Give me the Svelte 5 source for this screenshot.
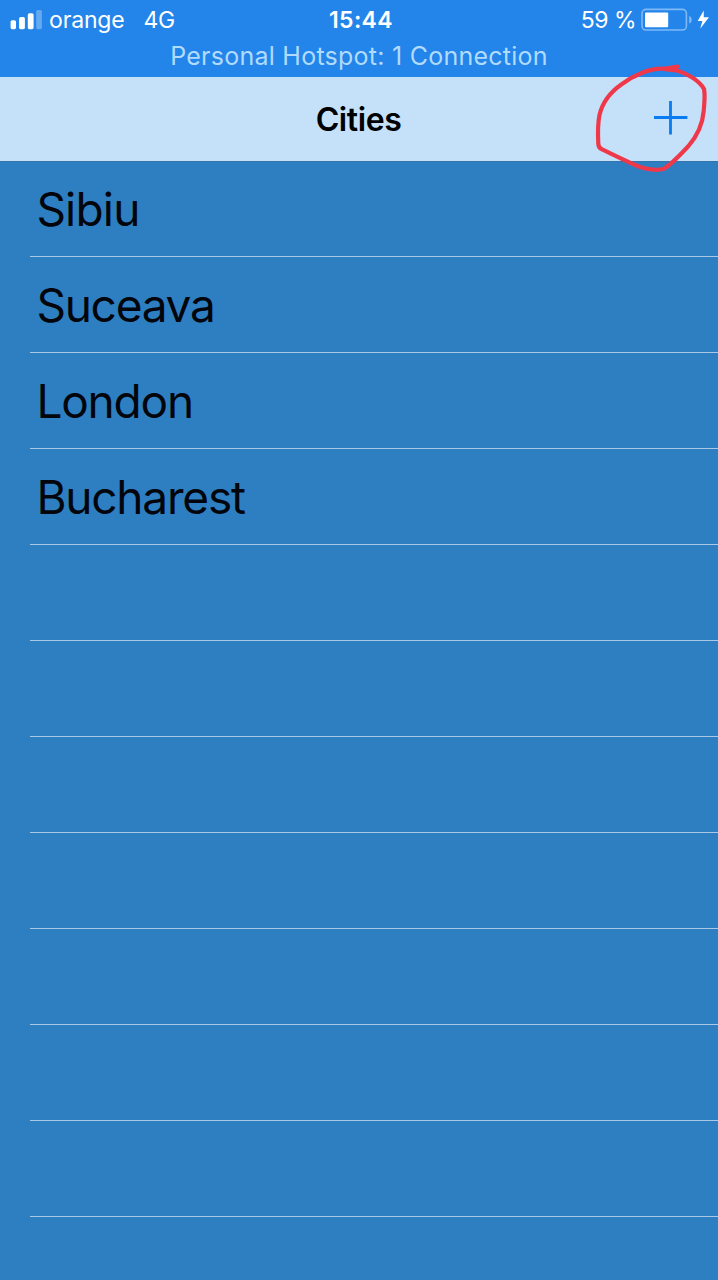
<script>
  const cities = [
    { name: 'Sibiu', spacing: -0.8 },
    { name: 'Suceava', spacing: -1.25 },
    { name: 'London', spacing: -1.2 },
    { name: 'Bucharest', spacing: -1.2 }
  ];
  const emptyRows = Array.from({ length: 8 });
</script>

<main class="screen">
  <header class="status">
    <div class="bar">
      <div class="left">
        <svg class="signal" width="32" height="20" viewBox="0 0 32 20">
          <rect x="0.6" y="10.2" width="5.4" height="9" rx="1.6" fill="#fff" />
          <rect x="9.1" y="7" width="5.8" height="12.2" rx="1.6" fill="#fff" />
          <rect x="17.8" y="3.2" width="5.8" height="16" rx="1.6" fill="#fff" />
          <rect x="26.2" y="0" width="5.7" height="19.2" rx="1.6" fill="#65aaf1" />
        </svg>
        <span class="carrier">orange</span>
        <span class="network">4G</span>
      </div>
      <span class="time">15:44</span>
      <div class="right">
        <span class="percent">59 %</span>
        <svg class="battery" width="70" height="24" viewBox="0 0 70 24">
          <rect x="2" y="1.4" width="44.4" height="20.6" rx="4" fill="none" stroke="#7fb9f5" stroke-width="1.6" />
          <rect x="5" y="4.4" width="23.2" height="14.8" rx="1" fill="#fff" />
          <path d="M49.2 8c3.4.8 3.4 6.8 0 7.6z" fill="#7fb9f5" />
          <path d="M63.7 2.4 57.7 12.9h4.7L60.2 20.8 69 9.3h-5.2z" fill="#fff" />
        </svg>
      </div>
    </div>
    <div class="hotspot"><span>Personal Hotspot: 1 Connection</span></div>
  </header>

  <nav class="nav">
    <h1>Cities</h1>
    <button aria-label="Add city">
      <svg width="34" height="34" viewBox="0 0 34 34">
        <path d="M0 16.5H33.4M16.5 0V33.4" stroke="#087cf0" stroke-width="2.8" />
      </svg>
    </button>
  </nav>

  <ul class="list">
    {#each cities as city}
      <li><span style:letter-spacing="{city.spacing}px">{city.name}</span></li>
    {/each}
    {#each emptyRows as _}
      <li></li>
    {/each}
  </ul>

  <svg class="mark" width="138" height="130" viewBox="0 0 138 130">
    <path
      d="M97.5 16.5 L84 18.7 C70 18 54 25 42 34 C29 43 22 54 19.5 65 C17.8 73 17.8 84 18.3 94 Q18.7 98 22 99.3 C34 105 49 112.5 60 117 C68 119.6 77 120.4 83.5 119 C92 114 101 104 108.5 96 C118 85 122.5 75 123.7 61 C124.5 51 125.3 45 124 39 C119 30 106 23 96 20.3 L85 19.2"
      fill="none" stroke="#ef394b" stroke-width="4.2" stroke-linecap="round" stroke-linejoin="round"
    />
  </svg>
</main>

<style>
  :global(body) {
    margin: 0;
    overflow: hidden;
  }
  .screen {
    position: relative;
    width: 718px;
    height: 1280px;
    overflow: hidden;
    background: #2e7fc2;
    font-family: Inter, 'Liberation Sans', sans-serif;
  }
  .status {
    height: 77px;
    background: #2384ea;
    color: #fff;
  }
  .bar {
    display: grid;
    grid-template-columns: 1fr auto 1fr;
    align-items: center;
    height: 40px;
    padding: 0 8px 0 10px;
    font-size: 23px;
    line-height: 40px;
  }
  .left,
  .right {
    display: flex;
    align-items: center;
    white-space: pre;
  }
  .right {
    justify-content: flex-end;
  }
  .carrier {
    margin-left: 7px;
    letter-spacing: -0.15px;
  }
  .network {
    margin-left: 19px;
    letter-spacing: -0.5px;
  }
  .time {
    padding-left: 2px;
    font-weight: 600;
    letter-spacing: 0.35px;
  }
  .percent {
    margin-right: 4px;
    letter-spacing: -0.5px;
  }
  .hotspot {
    height: 37px;
    line-height: 33px;
    font-size: 25px;
    letter-spacing: 0.25px;
    text-align: center;
    color: #b0dbfd;
  }
  .nav {
    display: grid;
    grid-template-columns: 1fr auto 1fr;
    align-items: center;
    height: 84px;
    background: #c4e1f9;
  }
  h1 {
    grid-column: 2;
    margin: 0;
    font-size: 32px;
    font-weight: 600;
    line-height: 84px;
    letter-spacing: -0.4px;
    padding: 1px 1px 0 0;
    height: 83px;
    color: #000;
  }
  button {
    display: flex;
    justify-self: end;
    margin: 0 30px 2px 0;
    padding: 0;
    border: 0;
    background: none;
  }
  .list {
    margin: 0;
    padding: 0 0 0 30px;
    list-style: none;
    box-shadow: inset 0 1px #3474ab;
  }
  li {
    box-sizing: border-box;
    height: 96px;
    padding-left: 6.4px;
    border-bottom: 1px solid #a9c9e6;
    font-size: 46px;
    line-height: 96px;
    color: #02060c;
  }
  .mark {
    position: absolute;
    top: 50px;
    left: 580px;
    pointer-events: none;
  }
</style>
